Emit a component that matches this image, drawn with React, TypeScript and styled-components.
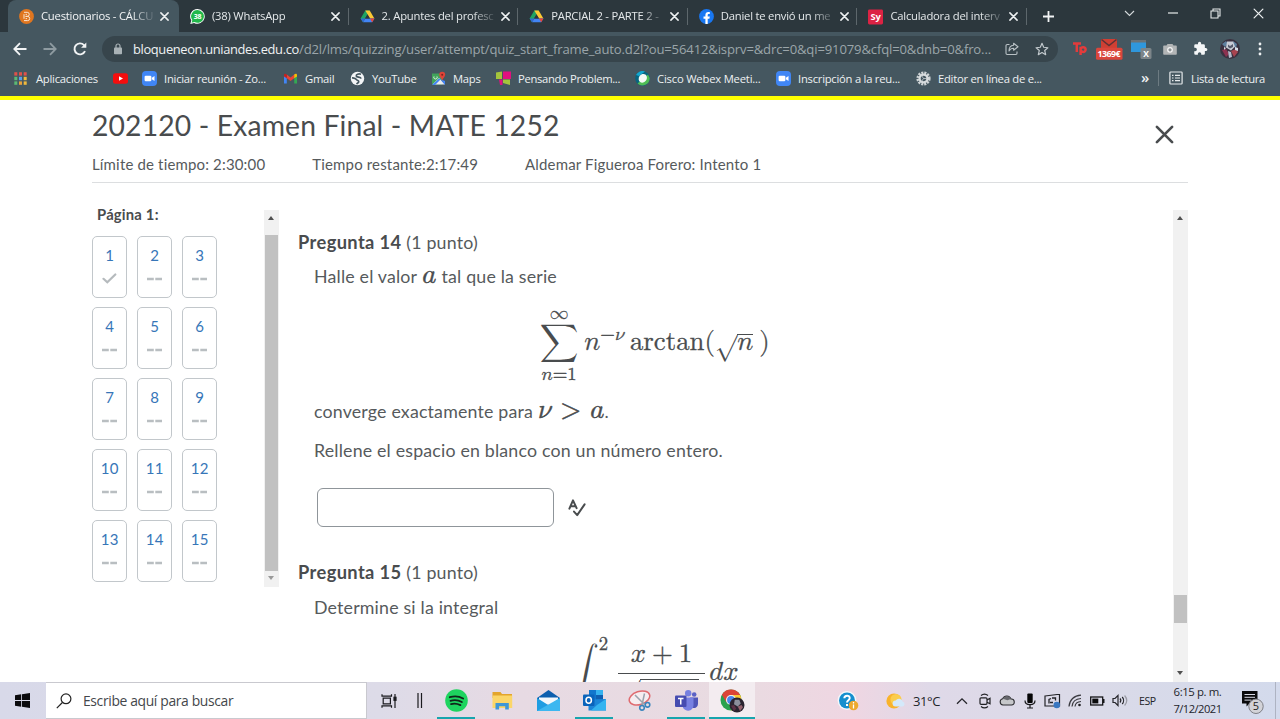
import React from "react";
import styled, { createGlobalStyle, css } from "styled-components";

const GlobalStyle = createGlobalStyle`
  *, *::before, *::after { box-sizing: border-box; }
  body { margin: 0; background: #fff; overflow: hidden; }
`;

const uiFont = `"Open Sans", "Noto Sans", sans-serif`;
const pageFont = `Lato, "Liberation Sans", sans-serif`;

const Screen = styled.div`
  display: flex;
  flex-direction: column;
  width: 1280px;
  height: 719px;
  overflow: hidden;
  font-family: ${uiFont};
`;

/* ---------- browser chrome ---------- */

const TabStrip = styled.div`
  display: flex;
  height: 32px;
  padding-left: 8px;
  background: #2c373d;
  color: #e4e8ea;
`;

const Tab = styled.div<{ $active?: boolean; $divider?: boolean }>`
  position: relative;
  display: flex;
  align-items: center;
  width: ${(p) => (p.$active ? 171 : 169.6)}px;
  padding: 0 8px 0 11px;
  font-size: 11.25px;
  letter-spacing: -0.22px;
  border-radius: 8px 8px 0 0;
  ${(p) => p.$active && css`background: #455760; color: #f3f5f6;`}
  ${(p) =>
    p.$divider &&
    css`
      &::after {
        content: "";
        position: absolute;
        right: 0;
        top: 8px;
        width: 1px;
        height: 17px;
        background: #5d676c;
      }
    `}
`;

const TabTitle = styled.span`
  width: 112px;
  margin-left: 7px;
  white-space: nowrap;
  line-height: 16px;
  mask-image: linear-gradient(90deg, #000 90px, rgba(0, 0, 0, 0.15) 112px);
`;

const Favicon = styled.span`
  display: flex;
  width: 15px;
  height: 15px;
  flex: none;
`;

const CloseSlot = styled.span`
  display: flex;
  margin-left: 7px;
`;

const NewTab = styled.span`
  display: flex;
  align-items: center;
  width: 41px;
  padding-left: 15px;
`;

const WindowControls = styled.div`
  display: flex;
  margin-left: auto;
  height: 26px;
`;

const WindowButton = styled.span`
  display: flex;
  align-items: center;
  justify-content: center;
  width: 43px;
`;

const Toolbar = styled.div`
  display: flex;
  align-items: center;
  height: 32px;
  padding: 1px 0 0 5px;
  background: #455760;
`;

const ToolSlot = styled.span<{ $w?: number }>`
  display: flex;
  align-items: center;
  justify-content: center;
  flex: none;
  width: ${(p) => p.$w ?? 30}px;
`;

const Omnibox = styled.div`
  display: flex;
  align-items: center;
  width: 956px;
  height: 26px;
  margin-left: 7px;
  margin-right: 6px;
  padding: 0 0 0 11px;
  border-radius: 13px;
  background: #37454c;
  font-size: 13.1px;
  white-space: nowrap;
`;

const UrlHost = styled.span`
  width: 166px;
  margin-left: 10px;
  color: #f0f2f3;
  font-size: 12.9px;
  letter-spacing: -0.36px;
`;

const UrlPath = styled.span`
  width: 699px;
  color: #9ba5aa;
  letter-spacing: -0.15px;
`;

const BookmarkBar = styled.div`
  display: flex;
  align-items: center;
  height: 32px;
  padding: 0 13px 4px 14px;
  background: #455760;
  color: #eef1f2;
  font-size: 11.25px;
`;

const Bookmark = styled.div<{ $w: number; $track?: number }>`
  display: flex;
  align-items: center;
  flex: none;
  gap: 7px;
  width: ${(p) => p.$w}px;
  white-space: nowrap;
  letter-spacing: ${(p) => p.$track ?? -0.25}px;
`;

const Overflow = styled.span`
  width: 17px;
  font-size: 15px;
  font-weight: 600;
  line-height: 16px;
  padding-bottom: 3px;
`;

const BarDivider = styled.span`
  width: 1px;
  height: 16px;
  margin-right: 10px;
  background: #6d7b82;
`;

const AccentLine = styled.div`
  height: 4px;
  background: #ffff00;
`;

/* ---------- exam page ---------- */

const Page = styled.main`
  display: flex;
  flex-direction: column;
  flex: 1;
  min-height: 0;
  overflow: hidden;
  padding: 0 92px;
  background: #fff;
  color: #494c4e;
  font-family: ${pageFont};
`;

const ExamHeader = styled.header`
  display: flex;
  justify-content: space-between;
  flex: none;
  height: 83px;
  border-bottom: 1px solid #dcdee0;
`;

const ExamTitle = styled.h1`
  margin: 7px 0 0;
  font-size: 28.3px;
  font-weight: 400;
  line-height: 36px;
  letter-spacing: 0.14px;
  white-space: nowrap;
`;

const ExamMeta = styled.div`
  display: flex;
  gap: 47px;
  margin-top: 10px;
  font-size: 15px;
  line-height: 22px;
  letter-spacing: 0.16px;
  color: #565a5c;
  white-space: nowrap;
`;

const CloseExam = styled.span`
  margin: 25px 14px 0 0;
`;

const ExamBody = styled.div`
  display: flex;
  flex: 1;
  min-height: 0;
`;

const Sidebar = styled.aside`
  width: 172px;
  padding-top: 21px;
`;

const PageLabel = styled.div`
  padding-left: 5px;
  font-size: 14.8px;
  font-weight: 700;
  line-height: 20px;
  letter-spacing: 0.2px;
`;

const QuestionGrid = styled.div`
  display: grid;
  grid-template-columns: repeat(3, 35.4px);
  grid-auto-rows: 62px;
  gap: 9px 9.6px;
  margin-top: 12px;
`;

const QuestionTile = styled.div`
  display: flex;
  flex-direction: column;
  align-items: center;
  padding-top: 7.5px;
  border: 1px solid #c2c7cb;
  border-radius: 5px;
  color: #3776b8;
  font-size: 15px;
  line-height: 21px;
  letter-spacing: 0.2px;
`;

const TileStatus = styled.span`
  display: flex;
  align-items: center;
  height: 26px;
`;

const ScrollTrack = styled.div<{ $h: number }>`
  display: flex;
  flex-direction: column;
  align-items: center;
  flex: none;
  width: 15px;
  height: ${(p) => p.$h}px;
  margin-top: 27px;
  background: #f1f1f1;
`;

const ScrollThumb = styled.div<{ $top: number; $h: number }>`
  width: 13px;
  height: ${(p) => p.$h}px;
  margin-top: ${(p) => p.$top}px;
  background: #c1c1c1;
`;

const ScrollArrow = styled.span<{ $down?: boolean; $dim?: boolean }>`
  width: 0;
  height: 0;
  border: 3.5px solid transparent;
  border-top-width: ${(p) => (p.$down ? 4 : 0)}px;
  border-bottom-width: ${(p) => (p.$down ? 0 : 4)}px;
  border-${(p) => (p.$down ? "top" : "bottom")}-color: ${(p) => (p.$dim ? "#9a9a9a" : "#505050")};
  margin: ${(p) => (p.$down ? "auto 1px 7px 0" : "6px 1px 0 0")};
`;

const Questions = styled.section`
  flex: 1;
  min-width: 0;
  padding: 46px 0 0 19px;
  font-size: 17.8px;
  letter-spacing: 0.18px;
  white-space: nowrap;
`;

const QuestionHeading = styled.h2<{ $top?: number }>`
  margin: ${(p) => p.$top ?? 0}px 0 0;
  font-size: 17.8px;
  font-weight: 400;
  line-height: 26px;
  color: #565a5c;

  strong {
    font-size: 18.3px;
    letter-spacing: 0.38px;
    color: #494c4e;
  }
`;

const QuestionBody = styled.div`
  width: 677px;
  margin-left: 16px;
  color: #565a5c;
`;

const Line = styled.p<{ $top: number }>`
  display: flex;
  align-items: baseline;
  height: 26px;
  margin: ${(p) => p.$top}px 0 0;
  line-height: 26px;
`;

const mathText = css`
  color: #494c4e;
  letter-spacing: 0;

  math {
    font-family: "Latin Modern Math", "STIX Two Math", "DejaVu Math TeX Gyre", "Liberation Serif", serif;
    font-size: 26.8px;
  }
`;

const Formula = styled.div<{ $top?: number; $h: number; $shift?: number }>`
  ${mathText}
  height: ${(p) => p.$h}px;
  padding-top: ${(p) => p.$top ?? 0}px;
  padding-left: ${(p) => p.$shift ?? 0}px;
  -webkit-text-stroke: 0.3px #494c4e;
`;

const InlineMath = styled.span<{ $end?: number }>`
  ${mathText}
  margin: 0 ${(p) => p.$end ?? 5}px 0 5px;
  line-height: 20px;
  -webkit-text-stroke: 0.5px #494c4e;
`;

const AnswerRow = styled.div`
  display: flex;
  align-items: center;
  gap: 14px;
  margin: 25px 0 0 2.6px;
`;

const AnswerInput = styled.input`
  width: 237px;
  height: 39px;
  border: 1px solid #8f959a;
  border-radius: 6px;
  background: #fff;
`;

/* ---------- taskbar ---------- */

const Taskbar = styled.footer`
  display: flex;
  flex: none;
  height: 37px;
  background: linear-gradient(90deg, #d8d9e9 0, #dddbe8 380px, #e7dae3 520px, #e9dbe1 740px, #efd6e2 850px, #dfd9e8 930px, #dadae8 1100px, #d3daec 1280px);
  color: #23252a;
`;

const StartButton = styled.div`
  display: flex;
  align-items: center;
  padding-left: 15px;
  width: 46px;
`;

const SearchBox = styled.div`
  display: flex;
  align-items: center;
  gap: 11px;
  width: 321px;
  padding-left: 10px;
  border: 1px solid #c9c9cf;
  border-width: 1px 1px 1px 0;
  background: #fff;
  color: #44474b;
  font-size: 13.9px;
  letter-spacing: -0.36px;
`;

const TaskGlyphs = styled.div`
  display: flex;
  align-items: center;
  gap: 20px;
  width: 66px;
  padding-left: 14px;
`;

const AppButton = styled.div<{ $state?: "open" | "focused" }>`
  display: flex;
  align-items: center;
  justify-content: center;
  position: relative;
  width: 46px;
  ${(p) => p.$state === "focused" && css`background: #f3ecf0;`}
  ${(p) =>
    p.$state &&
    css`
      &::after {
        content: "";
        position: absolute;
        bottom: 0;
        left: ${p.$state === "open" ? 4 : 0}px;
        right: ${p.$state === "open" ? 4 : 0}px;
        height: 2px;
        background: #17a5ae;
      }
    `}
`;

const Tray = styled.div`
  display: flex;
  align-items: center;
  margin-left: auto;
`;

const HelpSlot = styled.span`
  display: flex;
  width: 49px;
`;

const Weather = styled.span`
  display: flex;
  align-items: center;
  gap: 8px;
  width: 65px;
  font-size: 13px;
  letter-spacing: -0.4px;
`;

const TrayIcon = styled.span`
  display: flex;
  justify-content: center;
  width: 22.5px;
`;

const Language = styled.span`
  width: 34px;
  padding-left: 8px;
  font-size: 10.6px;
  letter-spacing: -0.5px;
`;

const Clock = styled.span`
  width: 65px;
  text-align: center;
  font-size: 11.4px;
  line-height: 16.5px;
  letter-spacing: -0.4px;
`;

const ClockDate = styled.div`
  font-size: 11.2px;
  letter-spacing: -0.55px;
`;

const Notifications = styled.span`
  display: flex;
  align-items: center;
  width: 45px;
  height: 37px;
  padding: 3px 0 0 11px;
`;

const DesktopEdge = styled.span`
  width: 5px;
  height: 37px;
  border-left: 1px solid #aeb3c2;
`;

/* ---------- icons ---------- */

const Cross = ({ size = 9, color = "#eef1f2", stroke = 1.7 }) => (
  <svg width={size} height={size} viewBox="0 0 10 10">
    <path d="M1 1l8 8M9 1l-8 8" stroke={color} strokeWidth={stroke} strokeLinecap="round" />
  </svg>
);

const BloqueIcon = () => (
  <svg width="15" height="15" viewBox="0 0 15 15">
    <circle cx="7.5" cy="7.5" r="7.4" fill="#e0761f" />
    <path d="M5 3.3h3.2a2 2 0 010 4.1H6.6h2a2.1 2.1 0 010 4.2H5M5 5.2v4.6M6.6 5.4h1.3M6.6 9.6h1.5" fill="none" stroke="#fbe6d2" strokeWidth="1" />
  </svg>
);

const WhatsAppIcon = () => (
  <svg width="15" height="15" viewBox="0 0 15 15">
    <path d="M7.6.1a7.3 7.3 0 11-3.5 13.8L.3 15l1-3.7A7.3 7.3 0 017.6.1z" fill="#fff" />
    <path d="M7.6 1a6.4 6.4 0 11-3.2 12l-2.8.8.7-2.7A6.4 6.4 0 017.6 1z" fill="#22b84c" />
    <text x="7.6" y="10" fontSize="7" fontWeight="700" textAnchor="middle" fill="#fff" fontFamily="Open Sans">38</text>
  </svg>
);

const DriveIcon = () => (
  <svg width="15" height="15" viewBox="0 0 15 15">
    <path d="M5.3 1.5h4.4L5.2 9.2 2.9 13.2.6 9.5z" fill="#1fa463" />
    <path d="M5.3 1.5h4.4l4.7 8H10z" fill="#fcc934" />
    <path d="M5.2 9.5h9.2l-2.2 3.8H3z" fill="#4285f4" />
    <path d="M5.2 9.5L3 13.3.6 9.5z" fill="#3367d6" />
    <path d="M10 9.5h4.4l-2.2 3.8z" fill="#ea4335" />
    <path d="M7.5 5.4l2.4 4.1H5.1z" fill="#2c373d" />
  </svg>
);

const FacebookIcon = () => (
  <svg width="15" height="15" viewBox="0 0 15 15">
    <circle cx="7.5" cy="7.5" r="7.4" fill="#1877f2" />
    <path d="M6.4 15V9.7H4.5V7.5h1.9V5.9c0-1.9 1.1-2.9 2.8-2.9l1.6.1v1.9h-.9c-.9 0-1.2.5-1.2 1.1v1.4h2.1l-.4 2.2H8.7V15z" fill="#fff" />
  </svg>
);

const SymbolabIcon = () => (
  <svg width="16" height="16" viewBox="0 0 16 16">
    <rect width="16" height="16" rx="1.5" fill="#dc2344" />
    <text x="8" y="11.6" fontSize="10" fontWeight="700" textAnchor="middle" fill="#fff" fontFamily="Open Sans">Sy</text>
  </svg>
);

const Arrow = ({ flip = false }) => (
  <svg width="14" height="14" viewBox="0 0 14 14" transform={flip ? "scale(-1 1)" : undefined}>
    <path d="M13.5 7H1.5M7 1.2L1.3 7 7 12.8" fill="none" stroke={flip ? "#8e9ba1" : "#f2f4f5"} strokeWidth="1.8" />
  </svg>
);

const ReloadIcon = () => (
  <svg width="14" height="14" viewBox="0 0 14 14">
    <path d="M12 9.2A5.5 5.5 0 1111 3.1l1 1" fill="none" stroke="#f2f4f5" strokeWidth="1.9" />
    <path d="M13.3.6v5.2H8.1z" fill="#f2f4f5" />
  </svg>
);

const LockIcon = () => (
  <svg width="10" height="12" viewBox="0 0 10 12">
    <rect x="1" y="4.6" width="8" height="6.6" rx="0.8" fill="#a9b2b6" />
    <path d="M3 5V3a2 2 0 014 0v2" fill="none" stroke="#a9b2b6" strokeWidth="1.2" />
  </svg>
);

const ShareIcon = () => (
  <svg width="14" height="14" viewBox="0 0 14 14" fill="none" stroke="#b9c1c5" strokeWidth="1.1" strokeLinejoin="round">
    <path d="M4.5 2.5H2.2A1.2 1.2 0 001 3.7v7.6a1.2 1.2 0 001.2 1.2h8.6a1.2 1.2 0 001.2-1.2V9.5" />
    <path d="M8.6 1.2L13 4.7 8.6 8.2V6.3C6.3 6.3 5 7.2 4 9c0-3.2 1.5-5.5 4.6-5.7z" />
  </svg>
);

const StarIcon = () => (
  <svg width="14" height="14" viewBox="0 0 14 14">
    <path d="M7 1.3l1.7 4 4.2.4-3.2 2.8 1 4.2L7 10.5l-3.7 2.2 1-4.2L1.1 5.7l4.2-.4z" fill="none" stroke="#c3cace" strokeWidth="1.15" strokeLinejoin="round" />
  </svg>
);

const TpIcon = () => (
  <svg width="15" height="16" viewBox="0 0 15 16">
    <path d="M1 2.5h8M4.8 2.5V11M8.6 5.8V14M8.6 8.4c0-3 5-3 5 .2s-5 3-5 0" fill="none" stroke="#e33b3b" strokeWidth="2.5" />
  </svg>
);

const MailCounterIcon = () => (
  <svg width="28" height="22" viewBox="0 0 28 22">
    <path d="M6 1h16v10H6z" fill="#cf3f33" />
    <path d="M6.500 1.500L14 7.500l7.500-6" fill="none" stroke="#5c3235" strokeWidth="1.5" />
    <rect x="1" y="9.800" width="26.500" height="12" rx="1.5" fill="#d9463c" />
    <text x="14" y="19" fontSize="8.800" fontWeight="700" textAnchor="middle" fill="#fff" fontFamily="Open Sans" textLength="23">1369€</text>
  </svg>
);

const CalendarIcon = () => (
  <svg width="22" height="20" viewBox="0 0 22 20">
    <path d="M1 1h15v3H1z" fill="#6a7378" />
    <path d="M1 3.500h15V13H1z" fill="#2f97dc" />
    <rect x="10.500" y="9" width="11" height="11" rx="1.500" fill="#7d8589" />
    <text x="16" y="17.600" fontSize="8.500" fontWeight="700" textAnchor="middle" fill="#fff" fontFamily="Open Sans">X</text>
  </svg>
);

const CameraIcon = () => (
  <svg width="14" height="12" viewBox="0 0 14 12">
    <path d="M4.500 1h5l1 1.500H13a.8.8 0 01.8.8V11a.8.8 0 01-.8.8H1a.8.8 0 01-.8-.8V3.300A.8.8 0 011 2.500h2.500z" fill="#b2b5b6" />
    <circle cx="7" cy="6.800" r="2.900" fill="#f4f4f4" />
    <circle cx="7" cy="6.800" r="1.600" fill="#8a8f92" />
  </svg>
);

const PuzzleIcon = () => (
  <svg width="15" height="15" viewBox="0 0 24 24" fill="#f4f6f7">
    <path d="M20.500 11H19V7a2 2 0 00-2-2h-4V3.500a2.500 2.500 0 00-5 0V5H4a2 2 0 00-2 2v3.800h1.500a2.700 2.700 0 010 5.400H2V20a2 2 0 002 2h3.800v-1.500a2.700 2.700 0 015.400 0V22H17a2 2 0 002-2v-4h1.500a2.500 2.500 0 000-5z" />
  </svg>
);

const AvatarIcon = () => (
  <svg width="20" height="20" viewBox="0 0 20 20">
    <circle cx="10" cy="10" r="10" fill="#3a3140" />
    <path d="M2 5l4-3 2 3-3 3zM13 2l4 3-1 4-4-2z" fill="#5d7f9e" />
    <path d="M7 2.500h6l2 5-4 4-5-3z" fill="#c9ccd6" />
    <path d="M8 5.500l2 1.500 3-2v3l-3 1.500L8 8z" fill="#565a6c" />
    <path d="M2 11l4-1 3 5-3 3z" fill="#8d3250" />
    <path d="M11 12l5-2 2 3-4 5z" fill="#a8434f" />
    <path d="M8 12l3 1 1 5-3 1z" fill="#b4bacb" />
    <path d="M15 8l3 1v3l-3-1zM4 8l2 1-2 2z" fill="#d8dce6" />
  </svg>
);

const DotsIcon = () => (
  <svg width="4" height="14" viewBox="0 0 4 14" fill="#eef1f2">
    <circle cx="2" cy="2" r="1.400" />
    <circle cx="2" cy="7" r="1.400" />
    <circle cx="2" cy="12" r="1.400" />
  </svg>
);

const appsColors = ["#e0524a", "#e0524a", "#e0524a", "#5bb974", "#5aa0e8", "#efb93c", "#5bb974", "#e8a13c", "#efb93c"];
const AppsIcon = () => (
  <svg width="15" height="15" viewBox="0 0 15 15">
    {appsColors.map((c, i) => (
      <rect key={i} x={0.3 + (i % 3) * 4.7} y={1.2 + Math.floor(i / 3) * 4.6} width="3" height="3.4" fill={c} />
    ))}
  </svg>
);

const YouTubeIcon = () => (
  <svg width="15" height="15" viewBox="0 0 15 15">
    <rect x="0" y="2.300" width="15" height="10.400" rx="2.500" fill="#f50d0d" />
    <path d="M6 5.200v4.600l4-2.300z" fill="#fff" />
  </svg>
);

const ZoomIcon = () => (
  <svg width="15" height="15" viewBox="0 0 15 15">
    <rect width="15" height="15" rx="4" fill="#4086f5" />
    <rect x="2.600" y="4.700" width="6.800" height="5.600" rx="1.200" fill="#fff" />
    <path d="M9.900 6.800l2.600-1.800v5L9.900 8.200z" fill="#fff" />
  </svg>
);

const GmailIcon = () => (
  <svg width="15" height="15" viewBox="0 0 15 15">
    <path d="M1 4v8.500h2.800V6.500z" fill="#4285f4" />
    <path d="M14 4v8.500h-2.800V6.500z" fill="#34a853" />
    <path d="M3.800 3.500v3.800l3.700 2.800 3.700-2.800V3.500L7.500 6.400z" fill="#ea4335" />
    <path d="M1 4.200c0-1.600 1.500-1.900 2.800-.7v3.800L1 5.400z" fill="#c5221f" />
    <path d="M14 4.200c0-1.600-1.500-1.900-2.800-.7v3.800L14 5.400z" fill="#fbbc04" />
  </svg>
);

const GlobeIcon = () => (
  <svg width="15" height="15" viewBox="0 0 15 15">
    <circle cx="7.500" cy="7.500" r="6.700" fill="#f3f5f6" />
    <path d="M11 3.200C8.500 2.500 6 3.300 6.300 5c.3 1.600 4.500.8 4.700 2.600M2 6.800c2 .3 3.600.3 4.500 1.800s2.300.3 2.200 2-1.600 1.200-1.900 2.600" fill="none" stroke="#455760" strokeWidth="1.700" />
  </svg>
);

const MapsIcon = () => (
  <svg width="15" height="15" viewBox="0 0 15 15">
    <path d="M1 2.500h10v11H1z" fill="#41a35a" />
    <path d="M1.500 13.500L8 7l6 6.500z" fill="#e8eaec" />
    <path d="M8 7.500L1 14h3l5.500-5.500zM9 8l5 2v4z" fill="#4285f4" />
    <path d="M3 5.500a1.700 1.700 0 103 0" fill="none" stroke="#fff" strokeWidth="0.900" />
    <path d="M11.200.8a3 3 0 013 3c0 2-2.200 3-3 6-.8-3-3-4-3-6a3 3 0 013-3z" fill="#df4438" />
    <circle cx="11.200" cy="3.800" r="1" fill="#7b2620" />
  </svg>
);

const PensandoIcon = () => (
  <svg width="15" height="15" viewBox="0 0 15 15">
    <path d="M0 1.500l6-1V8H0zM7 8.500h7V14l-7-2z" fill="#a4c43c" />
    <path d="M7 .5h8V8H7zM3 8.500h3.500V14H4z" fill="#e1107f" />
  </svg>
);

const WebexIcon = () => (
  <svg width="15" height="15" viewBox="0 0 15 15">
    <circle cx="7.500" cy="7.500" r="7.300" fill="#08647f" />
    <path d="M2.500 12.500A7.300 7.300 0 0014.700 7L13 3.500z" fill="#4fbd55" />
    <path d="M1 4a7 7 0 019-3.500L4 5z" fill="#13a7d0" />
    <ellipse cx="7.800" cy="7.300" rx="3.900" ry="4.600" transform="rotate(35 7.800 7.300)" fill="#f4faf7" />
  </svg>
);

const GearIcon = () => (
  <svg width="15" height="15" viewBox="0 0 15 15">
    <circle cx="7.500" cy="7.500" r="5.700" fill="none" stroke="#ced3d5" strokeWidth="2.800" strokeDasharray="2 1" />
    <circle cx="7.500" cy="7.500" r="3.900" fill="none" stroke="#d8dcde" strokeWidth="2.200" />
    <path d="M7.500 7.500L5.500 4.500M7.500 7.500h3.500M7.500 7.500l-2 3" stroke="#c8cdd0" strokeWidth="0.800" />
  </svg>
);

const ReadingListIcon = () => (
  <svg width="14" height="14" viewBox="0 0 14 14" fill="none" stroke="#e6eaec" strokeWidth="1.200">
    <rect x="0.900" y="1" width="12.200" height="12" rx="0.800" />
    <path d="M3 4.300h1.500M3 7h1.500M3 9.700h1.500M6 4.300h5M6 7h5M6 9.700h5" />
  </svg>
);

const CheckMark = () => (
  <svg width="15" height="11" viewBox="0 0 15 11">
    <path d="M1.500 5.800l3.800 3.500L13.300 1.500" fill="none" stroke="#b5babd" strokeWidth="2.200" strokeLinecap="round" />
  </svg>
);

const Dashes = () => (
  <svg width="15" height="4" viewBox="0 0 15 4">
    <path d="M0 2h6.800M8.300 2h6.700" stroke="#b9bec1" strokeWidth="2.600" />
  </svg>
);

const SpellCheckIcon = () => (
  <svg width="18" height="18" viewBox="0 0 18 18" fill="none" stroke="#494c4e" strokeWidth="2" strokeLinecap="round" strokeLinejoin="round">
    <path d="M1.400 9.700L5 1.300 8.600 9.200M2.800 7.300h4.500" />
    <path d="M6 12.600l3.200 3.500L16.600 5.400" />
  </svg>
);

const WindowsIcon = () => (
  <svg width="15" height="15" viewBox="0 0 15 15" fill="#0b0b0d">
    <path d="M0 2.200l6.200-.9v5.800H0zM7 1.200L15 0v7.100H7zM0 7.900h6.200v5.800L0 12.800zM7 7.900h8V15l-8-1.200z" />
  </svg>
);

const SearchIcon = () => (
  <svg width="16" height="16" viewBox="0 0 16 16" fill="none" stroke="#232323" strokeWidth="1.200">
    <circle cx="10" cy="5.800" r="4.900" />
    <path d="M6.400 9.500L.8 15.200" />
  </svg>
);

const TaskViewIcon = () => (
  <svg width="16" height="16" viewBox="0 0 16 16" fill="none" stroke="#1b1b1f" strokeWidth="1.200">
    <path d="M1 1.200v2h9.500v-2M1 14.800v-2h9.500v2M2.200 5.200h7.200v5.600H2.200zM14 1v14" />
    <rect x="13" y="4.300" width="2" height="3" fill="#1b1b1f" />
  </svg>
);

const BarsIcon = () => (
  <svg width="6" height="15" viewBox="0 0 6 15">
    <path d="M1 0v15M4.500 0v15" stroke="#1b1b1f" strokeWidth="1.200" />
  </svg>
);

const SpotifyIcon = () => (
  <svg width="23" height="23" viewBox="0 0 23 23">
    <circle cx="11.500" cy="11.500" r="11.300" fill="#1ed45f" />
    <path d="M4.800 8.200c4.500-1.300 9.500-.9 13.300 1.300M5.500 11.800c3.800-1.100 7.900-.7 11.300 1.200M6 15.100c3.200-.9 6.400-.5 9.400 1" fill="none" stroke="#10251a" strokeWidth="1.900" strokeLinecap="round" />
  </svg>
);

const ExplorerIcon = () => (
  <svg width="21" height="18" viewBox="0 0 21 18">
    <path d="M.5 0h8L10 2h10v4H.5z" fill="#e3a52c" />
    <path d="M.5 3.500h19.700V16H.5z" fill="#fbd669" />
    <path d="M3.500 17.500V11h13.300v6.500h-3.600v-3.300H7.100v3.300z" fill="#3f97d6" />
  </svg>
);

const MailIcon = () => (
  <svg width="23" height="22" viewBox="0 0 23 22">
    <path d="M0 8L11.500 0 23 8v3H0z" fill="#0d5fae" />
    <path d="M2 7.500h19V14H2z" fill="#f3f8fc" />
    <path d="M0 8l12 7.500L23 8v13H0z" fill="#1f9de2" />
    <path d="M0 21L23 8v13z" fill="#3db7f0" />
  </svg>
);

const OutlookIcon = () => (
  <svg width="23" height="21" viewBox="0 0 23 21">
    <path d="M6 0h14v10H6z" fill="#1176cc" />
    <path d="M13 0h7v5h-7z" fill="#35b1ee" />
    <path d="M13 5h7v5h-7z" fill="#0f5fb0" />
    <path d="M5.500 9.500L23 9v11.500H5.500z" fill="#1b86d8" />
    <path d="M14 15l9-6v11.500H8z" fill="#35b4f0" />
    <rect x="0" y="4.500" width="11.500" height="11.500" rx="1" fill="#0a64bb" />
    <ellipse cx="5.700" cy="10.200" rx="2.700" ry="3" fill="none" stroke="#fff" strokeWidth="1.500" />
  </svg>
);

const SnipIcon = () => (
  <svg width="24" height="22" viewBox="0 0 24 22" fill="none">
    <ellipse cx="11.500" cy="8" rx="10.600" ry="6.500" transform="rotate(-18 11.500 8)" fill="#f6edf0" stroke="#df6b70" strokeWidth="1.500" />
    <path d="M7 5l9.500 9.500M16.500 3.500L14 15" stroke="#9aa3ad" strokeWidth="1.500" />
    <circle cx="14" cy="17.800" r="2.300" stroke="#3a85bd" strokeWidth="1.600" />
    <circle cx="19.500" cy="14.800" r="2.300" stroke="#3a85bd" strokeWidth="1.600" />
  </svg>
);

const TeamsIcon = () => (
  <svg width="23" height="21" viewBox="0 0 23 21">
    <circle cx="19.200" cy="4.500" r="2.300" fill="#5b62c5" />
    <circle cx="13.200" cy="3.300" r="3.200" fill="#7680e0" />
    <path d="M15 7.500h8v6.500a4 4 0 01-6 3.500z" fill="#5056b8" />
    <path d="M7.500 7.500h11v7.500a5.500 5.500 0 01-11 .5z" fill="#7881e2" />
    <rect x="0" y="5.500" width="11.500" height="11.500" rx="1" fill="#464cb0" />
    <path d="M3 8.500h5.500M5.750 8.500v6" stroke="#fff" strokeWidth="1.500" />
  </svg>
);

const ChromeIcon = () => (
  <svg width="25" height="24" viewBox="0 0 25 24">
    <circle cx="11" cy="11" r="10.500" fill="#2aa24f" />
    <path d="M11 .5a10.500 10.500 0 00-9.100 5.200L6.500 13.500 11 6h9.200A10.500 10.500 0 0011 .5z" fill="#dc4437" />
    <path d="M11 6h9.200A10.500 10.500 0 0111 21.500L15.500 13.500z" fill="#fbc934" />
    <circle cx="11" cy="11" r="5" fill="#f4f6fa" />
    <circle cx="11" cy="11" r="3.900" fill="#4a86ea" />
    <g transform="translate(9.500 8.500) scale(0.750)">
      <circle cx="10" cy="10" r="10" fill="#2b2430" />
      <path d="M7 3h6l2 5-4 4-5-3z" fill="#8c8f9c" />
      <path d="M2 11l4-1 3 5-3 3z" fill="#5d3246" />
      <path d="M11 12l5-2 2 3-4 5z" fill="#96636f" />
    </g>
  </svg>
);

const HelpIcon = () => (
  <svg width="22" height="20" viewBox="0 0 22 20">
    <circle cx="10" cy="9.500" r="9.400" fill="#f4f8fb" />
    <circle cx="10" cy="9.500" r="8" fill="#168fce" />
    <path d="M7.300 7.300c.2-3.600 5.600-3.300 5.400-.1-.1 2-2.700 2-2.700 4.300M10 13v2" fill="none" stroke="#fff" strokeWidth="2" />
    <circle cx="16.500" cy="14.500" r="4.800" fill="#eda92f" />
    <path d="M16.500 13.500v4M16.500 11v1.500" stroke="#fff" strokeWidth="1.300" />
  </svg>
);

const WeatherIcon = () => (
  <svg width="19" height="18" viewBox="0 0 19 18">
    <circle cx="8" cy="9" r="7.600" fill="#f9b32c" />
    <circle cx="10" cy="7.500" r="5.500" fill="#fbcd4d" />
    <path d="M9.500 14.500a3 3 0 01.2-6 3.800 3.800 0 017 1.300 2.400 2.400 0 01-.2 4.700z" fill="#d4e9fa" />
  </svg>
);

const ChevronUp = () => (
  <svg width="12" height="8" viewBox="0 0 12 8"><path d="M1 6.800L6 1.800l5 5" fill="none" stroke="#26262b" strokeWidth="1.300" /></svg>
);

const MeetNowIcon = () => (
  <svg width="12" height="16" viewBox="0 0 12 16" fill="none" stroke="#202024" strokeWidth="1.200">
    <path d="M2 2.500C4 .8 7 .8 9 2.500M2 13.500c2 1.700 5 1.700 7 0" />
    <rect x="1" y="4.800" width="7" height="6.500" rx="1" />
    <path d="M8 7l3-1.700v5.500L8 9.200" />
  </svg>
);

const CloudIcon = () => (
  <svg width="16" height="11" viewBox="0 0 16 11">
    <path d="M4 10a3.200 3.200 0 01-.3-6.300A4.500 4.500 0 0112 4a3 3 0 01.500 6z" fill="#c6c7ca" stroke="#2c2c30" strokeWidth="1.100" />
    <path d="M3.800 3.700C5.500 0 10.500 0 12 4l-3.500 1.200z" fill="#66676c" />
  </svg>
);

const MicIcon = () => (
  <svg width="12" height="16" viewBox="0 0 12 16">
    <rect x="3.300" y="0.500" width="5.400" height="9.500" rx="1" fill="#060607" />
    <path d="M1 7.500c0 5.500 10 5.500 10 0M6 11.500V15M3 15h6" fill="none" stroke="#18181a" strokeWidth="1.200" />
  </svg>
);

const DisplayIcon = () => (
  <svg width="17" height="16" viewBox="0 0 17 16">
    <path d="M1 3l12-1.500h2.500V13H1z" fill="none" stroke="#232327" strokeWidth="1.200" />
    <path d="M5 10.500V6.500l2-1M8 5h3.500v2.500M6 9.500h3" fill="none" stroke="#232327" strokeWidth="1.300" />
    <circle cx="12.800" cy="12" r="3.300" fill="#3a77c0" />
  </svg>
);

const WifiIcon = () => (
  <svg width="14" height="13" viewBox="0 0 14 13" fill="none" stroke="#3a3a40" strokeWidth="1.200">
    <path d="M1 12.500C1.500 6 6 1.500 13 1.200M4 12.500C4.400 8 7.500 4.800 13 4.500M7 12.500c.3-2.600 2.500-4.800 6-5" />
    <circle cx="11.500" cy="11" r="1.300" fill="#202024" stroke="none" />
  </svg>
);

const BatteryIcon = () => (
  <svg width="15" height="10" viewBox="0 0 15 10">
    <rect x="0.700" y="1" width="12" height="8" fill="none" stroke="#141417" strokeWidth="1.300" />
    <rect x="2.300" y="2.600" width="6" height="4.800" fill="#0a0a0c" />
    <rect x="13" y="3" width="1.500" height="4" fill="#141417" />
  </svg>
);

const VolumeIcon = () => (
  <svg width="16" height="13" viewBox="0 0 16 13" fill="none" stroke="#26262b" strokeWidth="1.200">
    <path d="M1 4.500h2L6 1.500v10L3 8.500H1zM8 4.500c1 1.200 1 2.800 0 4M10.200 3c1.800 2 1.800 5 0 7" />
    <path d="M12.600 1.500c2.600 3 2.600 7 0 10" stroke="#9a9ba4" />
  </svg>
);

const NotificationIcon = () => (
  <svg width="24" height="25" viewBox="0 0 24 25">
    <path d="M1 1h15.500v12.500H8.500l-3 3v-3H1z" fill="#0a0a0c" />
    <path d="M3.500 4.500h10.500M3.500 7.300h10.500M3.500 10.100h7" stroke="#d6d8e4" strokeWidth="1" />
    <circle cx="15" cy="16.300" r="7.200" fill="#d3d3d8" stroke="#7e7f86" strokeWidth="1" />
    <text x="15" y="20.200" fontSize="11" textAnchor="middle" fill="#222" fontFamily="Open Sans">5</text>
  </svg>
);

/* ---------- data ---------- */

const tabs = [
  { title: "Cuestionarios - CÁLCU", icon: <BloqueIcon />, active: true },
  { title: "(38) WhatsApp", icon: <WhatsAppIcon />, divider: true },
  { title: "2. Apuntes del profesc", icon: <DriveIcon />, divider: true },
  { title: "PARCIAL 2 - PARTE 2 -", icon: <DriveIcon />, divider: true },
  { title: "Daniel te envió un me", icon: <FacebookIcon />, divider: true },
  { title: "Calculadora del interv", icon: <SymbolabIcon />, divider: true },
];

const bookmarks = [
  { w: 99, icon: <AppsIcon />, label: "Aplicaciones" },
  { w: 29, icon: <YouTubeIcon />, label: "" },
  { w: 141, icon: <ZoomIcon />, label: "Iniciar reunión - Zo..." },
  { w: 67, icon: <GmailIcon />, label: "Gmail" },
  { w: 81, icon: <GlobeIcon />, label: "YouTube" },
  { w: 65, icon: <MapsIcon />, label: "Maps" },
  { w: 139, icon: <PensandoIcon />, label: "Pensando Problem...", track: -0.34 },
  { w: 141, icon: <WebexIcon />, label: "Cisco Webex Meeti...", track: -0.2 },
  { w: 140, icon: <ZoomIcon />, label: "Inscripción a la reu..." },
  { w: 225, icon: <GearIcon />, label: "Editor en línea de e...", track: -0.26 },
];

const questionNumbers = Array.from({ length: 15 }, (_, i) => i + 1);

const SeriesFormula = () => (
  <math display="block">
    <mrow>
      <munderover>
        <mo>∑</mo>
        <mrow><mi>n</mi><mo lspace="0" rspace="0">=</mo><mn>1</mn></mrow>
        <mi>∞</mi>
      </munderover>
      <mspace width="0.05em" />
      <msup><mi>n</mi><mrow><mo>−</mo><mi>ν</mi></mrow></msup>
      <mspace width="0.16em" />
      <mi>arctan</mi>
      <mo stretchy="false">(</mo>
      <msqrt><mi>n</mi></msqrt>
      <mspace width="-0.25em" />
      <mo stretchy="false">)</mo>
    </mrow>
  </math>
);

const IntegralFormula = () => (
  <math display="block">
    <mrow>
      <msup><mo>∫</mo><mn>2</mn></msup>
      <mspace width="0.1em" />
      <mfrac>
        <mrow><mi>x</mi><mo>+</mo><mn>1</mn></mrow>
        <msqrt><mspace width="2.2em" height="0.85em" /></msqrt>
      </mfrac>
      <mspace width="0.12em" />
      <mi>d</mi>
      <mi>x</mi>
    </mrow>
  </math>
);

export default function App() {
  return (
    <Screen>
      <GlobalStyle />
      <TabStrip>
        {tabs.map((t) => (
          <Tab key={t.title} $active={t.active} $divider={t.divider}>
            <Favicon>{t.icon}</Favicon>
            <TabTitle>{t.title}</TabTitle>
            <CloseSlot><Cross /></CloseSlot>
          </Tab>
        ))}
        <NewTab>
          <svg width="13" height="13" viewBox="0 0 13 13"><path d="M6.500 1v11M1 6.500h11" stroke="#f2f4f5" strokeWidth="1.800" /></svg>
        </NewTab>
        <WindowControls>
          <WindowButton><svg width="11" height="7" viewBox="0 0 11 7"><path d="M1 1l4.500 4.500L10 1" fill="none" stroke="#d5dadc" strokeWidth="1.100" /></svg></WindowButton>
          <WindowButton><svg width="10" height="2" viewBox="0 0 10 2"><path d="M0 1h10" stroke="#e8ebec" strokeWidth="1.200" /></svg></WindowButton>
          <WindowButton><svg width="11" height="11" viewBox="0 0 11 11" fill="none" stroke="#e8ebec" strokeWidth="1.100"><path d="M1 3h7v7H1zM3 3V1h7v7H8" /></svg></WindowButton>
          <WindowButton><Cross size={11} stroke={1.1} /></WindowButton>
        </WindowControls>
      </TabStrip>

      <Toolbar>
        <ToolSlot><Arrow /></ToolSlot>
        <ToolSlot><Arrow flip /></ToolSlot>
        <ToolSlot><ReloadIcon /></ToolSlot>
        <Omnibox>
          <LockIcon />
          <UrlHost>bloqueneon.uniandes.edu.co</UrlHost>
          <UrlPath>/d2l/lms/quizzing/user/attempt/quiz_start_frame_auto.d2l?ou=56412&amp;isprv=&amp;drc=0&amp;qi=91079&amp;cfql=0&amp;dnb=0&amp;fro...</UrlPath>
          <ToolSlot $w={28}><ShareIcon /></ToolSlot>
          <ToolSlot $w={32}><StarIcon /></ToolSlot>
        </Omnibox>
        <ToolSlot><TpIcon /></ToolSlot>
        <ToolSlot><MailCounterIcon /></ToolSlot>
        <ToolSlot $w={33}><CalendarIcon /></ToolSlot>
        <ToolSlot $w={26}><CameraIcon /></ToolSlot>
        <ToolSlot $w={34}><PuzzleIcon /></ToolSlot>
        <ToolSlot $w={25}><AvatarIcon /></ToolSlot>
        <ToolSlot $w={36}><DotsIcon /></ToolSlot>
      </Toolbar>

      <BookmarkBar>
        {bookmarks.map((b, i) => (
          <Bookmark key={i} $w={b.w} $track={b.track}>
            <Favicon>{b.icon}</Favicon>
            {b.label}
          </Bookmark>
        ))}
        <Overflow>»</Overflow>
        <BarDivider />
        <Bookmark $w={98} $track={-0.36}>
          <Favicon><ReadingListIcon /></Favicon>
          Lista de lectura
        </Bookmark>
      </BookmarkBar>
      <AccentLine />

      <Page>
        <ExamHeader>
          <div>
            <ExamTitle>202120 - Examen Final - MATE 1252</ExamTitle>
            <ExamMeta>
              <span>Límite de tiempo: 2:30:00</span>
              <span>Tiempo restante:2:17:49</span>
              <span>Aldemar Figueroa Forero: Intento 1</span>
            </ExamMeta>
          </div>
          <CloseExam><Cross size={19} color="#494c4e" stroke={1.4} /></CloseExam>
        </ExamHeader>
        <ExamBody>
          <Sidebar>
            <PageLabel>Página 1:</PageLabel>
            <QuestionGrid>
              {questionNumbers.map((n) => (
                <QuestionTile key={n}>
                  {n}
                  <TileStatus>{n === 1 ? <CheckMark /> : <Dashes />}</TileStatus>
                </QuestionTile>
              ))}
            </QuestionGrid>
          </Sidebar>
          <ScrollTrack $h={377}>
            <ScrollArrow />
            <ScrollThumb $top={15} $h={336} />
            <ScrollArrow $down $dim />
          </ScrollTrack>
          <Questions>
            <QuestionHeading><strong>Pregunta 14</strong> (1 punto)</QuestionHeading>
            <QuestionBody>
              <Line $top={8}>
                Halle el valor
                <InlineMath><math><mi>a</mi></math></InlineMath>
                tal que la serie
              </Line>
              <Formula $h={97} $top={22}><SeriesFormula /></Formula>
              <Line $top={12}>
                converge exactamente para
                <InlineMath $end={0}><math><mi>ν</mi><mo lspace="0.34em" rspace="0.34em">&gt;</mo><mi>a</mi></math></InlineMath>
                .
              </Line>
              <Line $top={13}>Rellene el espacio en blanco con un número entero.</Line>
              <AnswerRow>
                <AnswerInput />
                <SpellCheckIcon />
              </AnswerRow>
            </QuestionBody>
            <QuestionHeading $top={32}><strong>Pregunta 15</strong> (1 punto)</QuestionHeading>
            <QuestionBody>
              <Line $top={9}>Determine si la integral</Line>
              <Formula $h={80} $top={17} $shift={1}><IntegralFormula /></Formula>
            </QuestionBody>
          </Questions>
          <ScrollTrack $h={472}>
            <ScrollArrow />
            <ScrollThumb $top={375} $h={28} />
            <ScrollArrow $down />
          </ScrollTrack>
        </ExamBody>
      </Page>

      <Taskbar>
        <StartButton><WindowsIcon /></StartButton>
        <SearchBox><SearchIcon />Escribe aquí para buscar</SearchBox>
        <TaskGlyphs><TaskViewIcon /><BarsIcon /></TaskGlyphs>
        <AppButton $state="open"><SpotifyIcon /></AppButton>
        <AppButton><ExplorerIcon /></AppButton>
        <AppButton><MailIcon /></AppButton>
        <AppButton $state="open"><OutlookIcon /></AppButton>
        <AppButton><SnipIcon /></AppButton>
        <AppButton $state="open"><TeamsIcon /></AppButton>
        <AppButton $state="focused"><ChromeIcon /></AppButton>
        <Tray>
          <HelpSlot><HelpIcon /></HelpSlot>
          <Weather><WeatherIcon />31°C</Weather>
          <TrayIcon><ChevronUp /></TrayIcon>
          <TrayIcon><MeetNowIcon /></TrayIcon>
          <TrayIcon><CloudIcon /></TrayIcon>
          <TrayIcon><MicIcon /></TrayIcon>
          <TrayIcon><DisplayIcon /></TrayIcon>
          <TrayIcon><WifiIcon /></TrayIcon>
          <TrayIcon><BatteryIcon /></TrayIcon>
          <TrayIcon><VolumeIcon /></TrayIcon>
          <Language>ESP</Language>
          <Clock>6:15 p. m.<ClockDate>7/12/2021</ClockDate></Clock>
          <Notifications><NotificationIcon /></Notifications>
          <DesktopEdge />
        </Tray>
      </Taskbar>
    </Screen>
  );
}
